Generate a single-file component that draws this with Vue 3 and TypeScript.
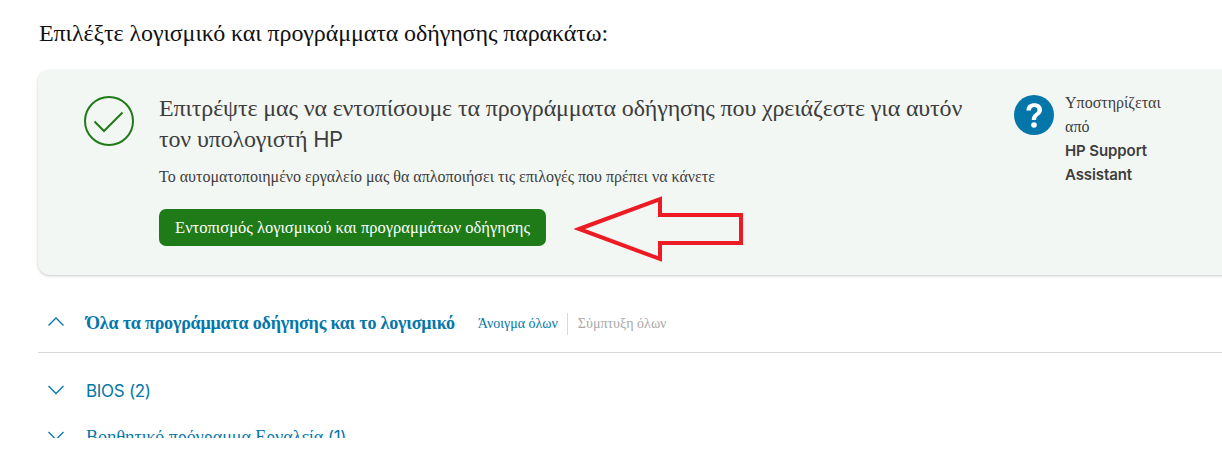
<script setup lang="ts">
const sections: { name: string; count: number; latin: boolean }[] = [
  { name: 'BIOS', count: 2, latin: true },
  { name: 'Βοηθητικό πρόγραμμα Εργαλεία', count: 1, latin: false },
];
</script>

<template>
  <main class="page">
    <h2 class="title">Επιλέξτε λογισμικό και προγράμματα οδήγησης παρακάτω:</h2>

    <section class="card">
      <svg class="check" viewBox="0 0 50 50" width="50" height="50" aria-hidden="true">
        <circle cx="25" cy="25" r="24" fill="none" stroke="#1e7b17" stroke-width="2" />
        <path d="M10.5 25.5 L20 35 L38.5 16.5" fill="none" stroke="#1e7b17" stroke-width="2" />
      </svg>
      <div class="card-main">
        <h3 class="card-title">Επιτρέψτε μας να εντοπίσουμε τα προγράμματα οδήγησης που χρειάζεστε για αυτόν τον υπολογιστή <span class="sans">HP</span></h3>
        <p class="card-text">Το αυτοματοποιημένο εργαλείο μας θα απλοποιήσει τις επιλογές που πρέπει να κάνετε</p>
        <button class="detect" type="button">Εντοπισμός λογισμικού και προγραμμάτων οδήγησης</button>
      </div>
      <div class="support">
        <svg class="help" viewBox="0 0 40 40" width="40" height="40" aria-hidden="true">
          <circle cx="20" cy="20" r="20" fill="#0476aa" />
          <path d="M12.5 15.5 C12.5 10.8 15.8 8.3 20.3 8.3 C25 8.3 28 10.9 28 14.7 C28 17.6 26.4 19.1 24.5 20.5 C22.7 21.9 22.1 22.8 22.1 25 L17.8 25 C17.8 22 18.5 20.4 20.7 18.7 C22.5 17.3 23.5 16.6 23.5 14.9 C23.5 13.2 22.3 12.1 20.3 12.1 C18.2 12.1 17 13.4 16.9 15.5 Z" fill="#fff" />
          <circle cx="20" cy="30" r="2.8" fill="#fff" />
        </svg>
        <div class="support-text">
          <div>Υποστηρίζεται</div>
          <div>από</div>
          <div class="sans strong">HP Support</div>
          <div class="sans strong">Assistant</div>
        </div>
      </div>
    </section>

    <div class="all-row">
      <svg class="chev chev-up" viewBox="0 0 16 10" width="16" height="10" aria-hidden="true">
        <path d="M0.5 9.5 L8 2 L15.5 9.5" fill="none" stroke="#0476aa" stroke-width="1.3" />
      </svg>
      <strong class="all-title">Όλα τα προγράμματα οδήγησης και το λογισμικό</strong>
      <a class="open-all">Άνοιγμα όλων</a>
      <a class="collapse-all">Σύμπτυξη όλων</a>
    </div>

    <div class="rows">
      <div v-for="s in sections" :key="s.name" class="row">
        <svg class="chev" viewBox="0 0 16 10" width="16" height="10" aria-hidden="true">
          <path d="M0.5 1 L8 8.5 L15.5 1" fill="none" stroke="#0476aa" stroke-width="1.3" />
        </svg>
        <span class="row-name"><span :class="{ sans: s.latin }">{{ s.name }}</span> <span class="sans">({{ s.count }})</span></span>
      </div>
    </div>

    <svg class="arrow" viewBox="0 0 172 66" width="172" height="66" aria-hidden="true">
      <path d="M5 33 L86 3 L86 19 L167 19 L167 47 L86 47 L86 63 Z" fill="none" stroke="#ed1c24" stroke-width="4" stroke-linejoin="miter" />
    </svg>
  </main>
</template>

<style scoped>
.page {
  position: relative;
  width: 1222px;
  height: 438px;
  overflow: hidden;
  background: #fff;
  padding: 0 0 0 38px;
  box-sizing: border-box;
  font-family: "Liberation Serif", "Times New Roman", serif;
}
.sans { font-family: Inter, "Liberation Sans", sans-serif; }
.title {
  margin: 0 0 0 1px;
  padding-top: 18px;
  height: 70px;
  box-sizing: border-box;
  font-size: 24px;
  line-height: 30px;
  letter-spacing: -0.1px;
  font-weight: 400;
  color: #111;
  white-space: nowrap;
}
.card {
  width: 1230px;
  height: 205px;
  display: flex;
  align-items: flex-start;
  background: #f3f7f3;
  border-radius: 12px;
  box-shadow: 0 1px 3px rgba(0, 0, 0, 0.22);
  box-sizing: border-box;
  padding: 26px 0 0 46px;
}
.check { flex: none; margin-right: 25px; }
.card-main { width: 820px; flex: none; margin-top: -3px; }
.card-title {
  margin: 0;
  width: 815px;
  font-size: 24px;
  line-height: 31px;
  letter-spacing: -0.14px;
  font-weight: 400;
  color: #3d3d3d;
}
.card-title .sans { font-size: 22px; letter-spacing: -0.5px; }
.card-text {
  margin: 12px 0 0;
  font-size: 16px;
  line-height: 20px;
  color: #3d3d3d;
}
.detect {
  display: block;
  margin-top: 22px;
  width: 387px;
  height: 37px;
  border: 0;
  border-radius: 7px;
  background: #1e7b17;
  color: #fff;
  font: 400 16.5px/20px "Liberation Serif", serif;
  padding: 0;
}
.support { display: flex; margin-left: 35px; margin-top: -5px; gap: 11px; }
.help { flex: none; margin-top: 4px; }
.support-text {
  font-size: 16px;
  line-height: 24px;
  color: #3d3d3d;
}
.strong { font-size: 15px; font-weight: 600; letter-spacing: -0.1px; }
.all-row {
  display: flex;
  align-items: center;
  height: 78px;
  border-bottom: 1px solid #d9d9d9;
  padding: 20px 0 0 10px;
  box-sizing: border-box;
}
.chev-up { margin-top: -6px; }
.all-title {
  margin-left: 22px;
  font-size: 18px;
  letter-spacing: -0.18px;
  color: #0476aa;
}
.open-all {
  margin-left: 23px;
  padding-right: 9px;
  border-right: 1px solid #d9d9d9;
  font-size: 14px;
  line-height: 22px;
  color: #0476aa;
}
.collapse-all {
  margin-left: 10px;
  font-size: 14px;
  color: #a8a8a8;
}
.rows { padding-top: 15px; }
.row {
  display: flex;
  align-items: center;
  height: 46px;
  padding-left: 10px;
  color: #0476aa;
}
.row .chev { margin-top: -2px; }
.row-name {
  margin-left: 22px;
  font-size: 18px;
}
.row-name .sans { font-size: 17px; letter-spacing: -0.3px; }
.arrow {
  position: absolute;
  left: 574px;
  top: 196px;
}
</style>
